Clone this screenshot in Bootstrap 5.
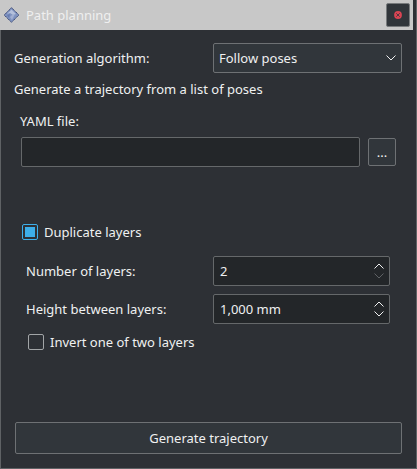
<!DOCTYPE html>
<html lang="en">
<head>
<meta charset="utf-8">
<meta name="viewport" content="width=device-width, initial-scale=1">
<title>Path planning</title>
<link href="https://cdn.jsdelivr.net/npm/bootstrap@5.3.0/dist/css/bootstrap.min.css" rel="stylesheet">
<style>
body { background: #2d3035; color: #eff0f1; font: 13px/18px "Noto Sans", sans-serif; }
.window { width: 417px; height: 469px; border: solid #5f6265; border-width: 0 1px 1px; background: #2d3035; }
.titlebar { height: 30px; margin-left: -1px; width: 413px; background: #c8c8c8; color: #efefef; padding: 0 3px 0 4px; }
.titlebar span { margin-left: 6px; }
.close-btn { width: 24px; height: 24px; background: #31363b; border: 1px solid #777a7c; border-radius: 2px; }
.content { padding: 13px 14px 14px 13px; }
.field { height: 30px; border: 1px solid #65686a; border-radius: 2px; background: #232629; color: inherit; font-size: inherit; line-height: 18px; padding: 0 4px 0 6px; }
.field.combo { background: #31363b; border-color: #6e7174; width: 189px; padding-left: 5px; }
.field.spin { width: 177px; }
.tool { background: #31363b; border: 1px solid #6e7174; border-radius: 2px; color: inherit; font-size: inherit; line-height: 18px; padding: 0; }
.browse { width: 28px; height: 28px; }
.generate { height: 32px; margin-left: 1px; }
.file-group { padding: 14px 6px 0 6px; }
.file-row { margin: 7px 0 0 1px; }
.intro { margin-top: 7px; }
.layers { padding: 56px 12px 0 7px; }
.check-row { padding-left: 1px; gap: 6px; }
.box { width: 16px; height: 16px; margin: 0; border: 1px solid #a2a5a7; border-radius: 2px; background: transparent; flex: none; }
.form-check-input.box { border-radius: 2px; }
.form-check-input.box:checked { background: #3daee9 content-box; background-image: none; border-color: #3daee9; padding: 2px; }
.layer-fields { padding: 15px 0 0 5px; }
.invert { margin-top: 9px; padding-left: 2px; }
svg { display: block; flex: none; }
</style>
<script src="https://cdn.jsdelivr.net/npm/bootstrap@5.3.0/dist/js/bootstrap.bundle.min.js"></script>
</head>
<body class="overflow-hidden">
<div class="window d-flex flex-column">
  <header class="titlebar d-flex align-items-center">
    <svg width="16" height="16" viewBox="0 0 16 16"><path d="M7.5.7 14.8 8 7.5 15.3.2 8Z" fill="#7f93c0" stroke="#2f3f70" stroke-dasharray="1.5 .5"/><path d="M7.5 2.5 12 7 9 8 6 6 3 7Z" fill="#b4c0dc"/><path d="m8 8 3-1-3 6-2-3Z" fill="#a1afd2"/><path d="m3 8 3-1-1 4Z" fill="#667cb0"/></svg>
    <span>Path planning</span>
    <button type="button" class="close-btn ms-auto p-0 d-flex align-items-center justify-content-center" aria-label="Close">
      <svg width="8" height="8" viewBox="0 0 8 8"><circle cx="4" cy="4" r="3.9" fill="#da4453"/><path d="m2.3 2.3 3.4 3.4m0-3.4L2.3 5.7" stroke="#51383f" stroke-width="1"/></svg>
    </button>
  </header>
  <main class="content d-flex flex-column flex-grow-1">
    <div class="d-flex align-items-center justify-content-between">
      <label>Generation algorithm:</label>
      <div class="field combo d-flex align-items-center justify-content-between" role="combobox" tabindex="0">
        <span>Follow poses</span>
        <svg width="12" height="8" viewBox="0 0 12 8" fill="none" stroke="#eff0f1"><path d="m1.5 1.5 4.5 4.5 4.5-4.5"/></svg>
      </div>
    </div>
    <div class="intro">Generate a trajectory from a list of poses</div>
    <div class="file-group">
      <label for="yaml" class="d-block">YAML file:</label>
      <div class="file-row d-flex align-items-center gap-2">
        <input id="yaml" type="text" class="field flex-grow-1">
        <button type="button" class="tool browse">...</button>
      </div>
    </div>
    <div class="layers">
      <div class="check-row d-flex align-items-center">
        <input class="form-check-input box" type="checkbox" id="dup" checked><label for="dup">Duplicate layers</label>
      </div>
      <div class="layer-fields">
        <div class="d-flex align-items-center justify-content-between">
          <label>Number of layers:</label>
          <div class="field spin d-flex align-items-center justify-content-between"><span>2</span>
            <svg width="12" height="18" viewBox="0 0 12 18" fill="none" stroke="#eff0f1"><path d="M1.5 6.5 6 2l4.5 4.5"/><path d="M1.5 11.5 6 16l4.5-4.5" stroke="#5f6265"/></svg></div>
        </div>
        <div class="d-flex align-items-center justify-content-between mt-2">
          <label>Height between layers:</label>
          <div class="field spin d-flex align-items-center justify-content-between"><span>1,000 mm</span>
            <svg width="12" height="18" viewBox="0 0 12 18" fill="none" stroke="#eff0f1"><path d="M1.5 6.5 6 2l4.5 4.5"/><path d="M1.5 11.5 6 16l4.5-4.5"/></svg></div>
        </div>
        <div class="check-row invert d-flex align-items-center">
          <input class="form-check-input box" type="checkbox" id="inv"><label for="inv">Invert one of two layers</label>
        </div>
      </div>
    </div>
    <button type="button" class="tool generate mt-auto">Generate trajectory</button>
  </main>
</div>
</body>
</html>
